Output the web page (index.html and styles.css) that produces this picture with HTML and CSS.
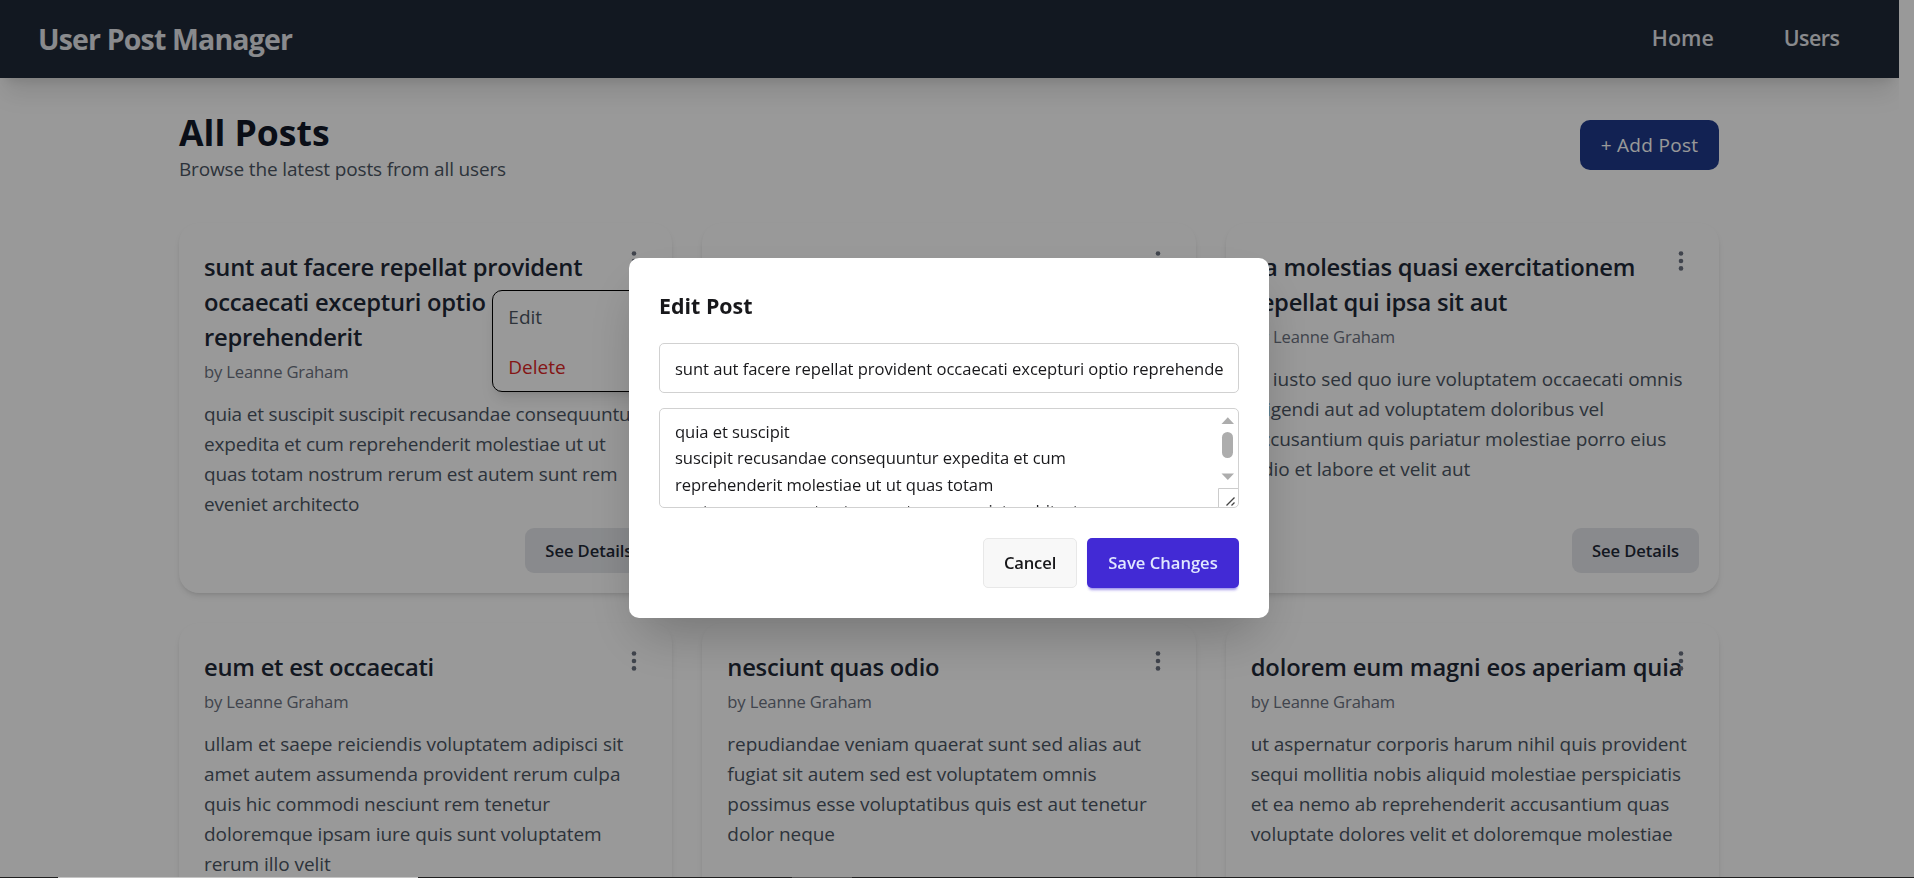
FILE: index.html
```html
<!DOCTYPE html>
<html lang="en">
<head>
<meta charset="utf-8">
<title>User Post Manager</title>
<link rel="stylesheet" href="styles.css">
</head>
<body>
<svg class="defs" width="0" height="0" aria-hidden="true">
  <symbol id="dots" viewBox="0 0 6 20"><circle cx="3" cy="2.5" r="2.3"/><circle cx="3" cy="10" r="2.3"/><circle cx="3" cy="17.4" r="2.3"/></symbol>
</svg>
<div class="page">
  <header class="navbar">
    <div class="brand">User Post Manager</div>
    <nav class="links"><a class="link">Home</a><a class="link users">Users</a></nav>
  </header>
  <main class="main">
    <div class="heading">
      <div>
        <h1 class="title">All Posts</h1>
        <p class="subtitle">Browse the latest posts from all users</p>
      </div>
      <button class="add">+ Add Post</button>
    </div>
    <div class="grid">
      <article class="card">
        <h2 class="card-title">sunt aut facere repellat provident<br>occaecati excepturi optio<br>reprehenderit</h2>
        <p class="author">by Leanne Graham</p>
        <p class="text">quia et suscipit suscipit recusandae consequuntur<br>expedita et cum reprehenderit molestiae ut ut<br>quas totam nostrum rerum est autem sunt rem<br>eveniet architecto</p>
        <button class="details">See Details</button>
        <svg class="dots"><use href="#dots"/></svg>
        <div class="menu"><a class="item">Edit</a><a class="item danger">Delete</a></div>
      </article>
      <article class="card">
        <h2 class="card-title">qui est esse</h2>
        <p class="author">by Leanne Graham</p>
        <button class="details">See Details</button>
        <svg class="dots"><use href="#dots"/></svg>
      </article>
      <article class="card">
        <h2 class="card-title">ea molestias quasi exercitationem<br>repellat qui ipsa sit aut</h2>
        <p class="author">by Leanne Graham</p>
        <p class="text wide">et iusto sed quo iure voluptatem occaecati omnis<br>eligendi aut ad voluptatem doloribus vel<br>accusantium quis pariatur molestiae porro eius<br>odio et labore et velit aut</p>
        <button class="details">See Details</button>
        <svg class="dots"><use href="#dots"/></svg>
      </article>
      <article class="card">
        <h2 class="card-title">eum et est occaecati</h2>
        <p class="author">by Leanne Graham</p>
        <p class="text wide">ullam et saepe reiciendis voluptatem adipisci sit<br>amet autem assumenda provident rerum culpa<br>quis hic commodi nesciunt rem tenetur<br>doloremque ipsam iure quis sunt voluptatem<br>rerum illo velit</p>
        <svg class="dots"><use href="#dots"/></svg>
      </article>
      <article class="card">
        <h2 class="card-title">nesciunt quas odio</h2>
        <p class="author">by Leanne Graham</p>
        <p class="text wide">repudiandae veniam quaerat sunt sed alias aut<br>fugiat sit autem sed est voluptatem omnis<br>possimus esse voluptatibus quis est aut tenetur<br>dolor neque</p>
        <svg class="dots"><use href="#dots"/></svg>
      </article>
      <article class="card">
        <h2 class="card-title loose">dolorem eum magni eos aperiam quia</h2>
        <p class="author">by Leanne Graham</p>
        <p class="text wide">ut aspernatur corporis harum nihil quis provident<br>sequi mollitia nobis aliquid molestiae perspiciatis<br>et ea nemo ab reprehenderit accusantium quas<br>voluptate dolores velit et doloremque molestiae</p>
        <svg class="dots"><use href="#dots"/></svg>
      </article>
    </div>
  </main>
</div>
<div class="overlay">
  <div class="modal">
    <h3 class="modal-title">Edit Post</h3>
    <div class="field input">sunt aut facere repellat provident occaecati excepturi optio reprehende</div>
    <div class="field area">
      <div class="area-text">quia et suscipit<br>suscipit recusandae consequuntur expedita et cum<br>reprehenderit molestiae ut ut quas totam<br>nostrum rerum est autem sunt rem eveniet architecto</div>
      <svg class="scroll" width="20" height="98" viewBox="0 0 20 98">
        <path d="M3.5 15 9.8 8.3 16 15z" fill="#adadad"/>
        <rect x="4" y="23" width="11" height="26" rx="5.5" fill="#adadad"/>
        <path d="M3.5 64.5h12.5L9.8 71z" fill="#adadad"/>
        <path d="M.5 98V79.5H20" fill="none" stroke="#ccc"/>
        <path d="M8.5 96.5 16.5 88.5M13.5 96.5 16.5 93.5" fill="none" stroke="#444" stroke-width="1.3"/>
      </svg>
    </div>
    <div class="actions"><button class="btn cancel">Cancel</button><button class="btn save">Save Changes</button></div>
  </div>
</div>
<div class="edge"><span class="edge-light"></span><span class="edge-mid"></span></div>
</body>
</html>
```

FILE: styles.css
```css
* { box-sizing: border-box; margin: 0; padding: 0; }
html, body { height: 100%; overflow: hidden; }
body {
  background: #fff;
  font: 19px/30px "Open Sans", "Noto Sans", sans-serif;
  white-space: nowrap;
}
button { font: inherit; border: 0; white-space: nowrap; }
.defs { position: absolute; }
.page { width: 1899px; height: 878px; overflow: hidden; }
.navbar {
  height: 78px;
  padding: 0 59.5px 0 38px;
  display: flex;
  align-items: center;
  justify-content: space-between;
  background: #1f2937;
  box-shadow: 0 20px 25px -5px rgba(0,0,0,.1), 0 8px 10px -6px rgba(0,0,0,.1);
  color: #e5e7eb;
}
.brand { font-size: 28.5px; font-weight: 700; letter-spacing: -.84px; }
.links { display: flex; gap: 70px; padding-bottom: 3px; font-size: 21.4px; font-weight: 600; }
.users { letter-spacing: -.5px; }
.main { width: 1540px; margin-left: 179px; padding-top: 30px; }
.heading { display: flex; justify-content: space-between; align-items: center; margin-bottom: 40px; }
.title { font-size: 35.6px; line-height: 45px; font-weight: 700; color: #111827; padding-top: 2px; margin-bottom: -2px; }
.subtitle { color: #4b5563; letter-spacing: -.15px; padding-top: 1px; margin-bottom: -1px; }
.add { width: 139px; height: 50px; margin-top: -1px; border-radius: 10px; background: #1e3a8a; color: #fff; letter-spacing: .3px; }
.grid { display: grid; grid-template-columns: repeat(3, 1fr); gap: 30px; grid-auto-rows: 370px; }
.card {
  position: relative;
  display: flex;
  flex-direction: column;
  padding: 27px 20px 20px 25px;
  border-radius: 20px;
  background: #fff;
  box-shadow: 0 4px 6px -1px rgba(0,0,0,.1), 0 2px 4px -2px rgba(0,0,0,.1);
}
.card-title { font-size: 23.75px; line-height: 35px; font-weight: 600; color: #1f2937; letter-spacing: -.24px; }
.loose { letter-spacing: -.13px; }
.author { margin-top: 4px; font-size: 16.6px; line-height: 25px; color: #6b7280; letter-spacing: -.15px; }
.text { margin-top: 15px; color: #4b5563; letter-spacing: -.17px; }
.wide { letter-spacing: -.06px; }
.details {
  align-self: flex-end;
  width: 127px;
  height: 45px;
  margin-top: auto;
  padding-top: 1px;
  border-radius: 9px;
  background: #e5e7eb;
  color: #1f2937;
  font-size: 16.6px;
  font-weight: 600;
  letter-spacing: -.08px;
}
.dots { position: absolute; top: 28px; right: 35px; width: 6px; height: 20px; fill: #6b7280; }
.menu {
  position: absolute;
  top: 67px;
  right: 19px;
  width: 161px;
  height: 102px;
  border: 1px solid #000;
  border-radius: 10px;
  background: #fff;
  box-shadow: 0 10px 15px -3px rgba(0,0,0,.1), 0 4px 6px -4px rgba(0,0,0,.1);
}
.item { display: block; height: 50px; padding: 11px 15px 0; line-height: 30px; color: #4b5563; }
.danger { color: #dc2626; }
.overlay {
  position: fixed;
  inset: 0;
  padding: 0 16px 2px 0;
  display: flex;
  align-items: center;
  justify-content: center;
  background: rgba(0,0,0,.4);
}
.modal {
  width: 640px;
  height: 360px;
  padding: 30px;
  border-radius: 10px;
  background: #fff;
  color: #18181b;
  box-shadow: 0 25px 50px -12px rgba(0,0,0,.25);
}
.modal-title { margin-bottom: 20px; padding-top: 1px; font-size: 21.4px; line-height: 34px; font-weight: 700; }
.field { border: 1px solid #d1d1d1; border-radius: 5px; font-size: 16.6px; padding: 0 15px; overflow: hidden; }
.input { height: 50px; line-height: 49px; letter-spacing: -.05px; }
.area { height: 100px; margin-top: 15px; padding: 10px 0 0 15px; display: flex; justify-content: space-between; line-height: 26.25px; }
.area-text { letter-spacing: -.08px; }
.scroll { flex: none; margin-top: -10px; }
.actions { display: flex; justify-content: flex-end; gap: 10px; margin-top: 30px; }
.btn { height: 50px; border-radius: 5px; font-size: 16.6px; font-weight: 600; }
.cancel { width: 94px; background: #f8f8f8; border: 1px solid #e8e8e8; color: #18181b; letter-spacing: -.15px; }
.save { width: 152px; background: #422ad5; color: #e0e7ff; box-shadow: 0 3px 3px -2px rgba(66,42,213,.4), 0 4px 3px -2px rgba(66,42,213,.3); }
.edge { position: fixed; left: 0; right: 0; bottom: 0; height: 1px; display: flex; background: #202020; }
.edge-light { width: 360px; margin-left: 58px; background: #c4c4c4; }
.edge-mid { width: 60px; margin-left: 374px; background: #555; }
```
